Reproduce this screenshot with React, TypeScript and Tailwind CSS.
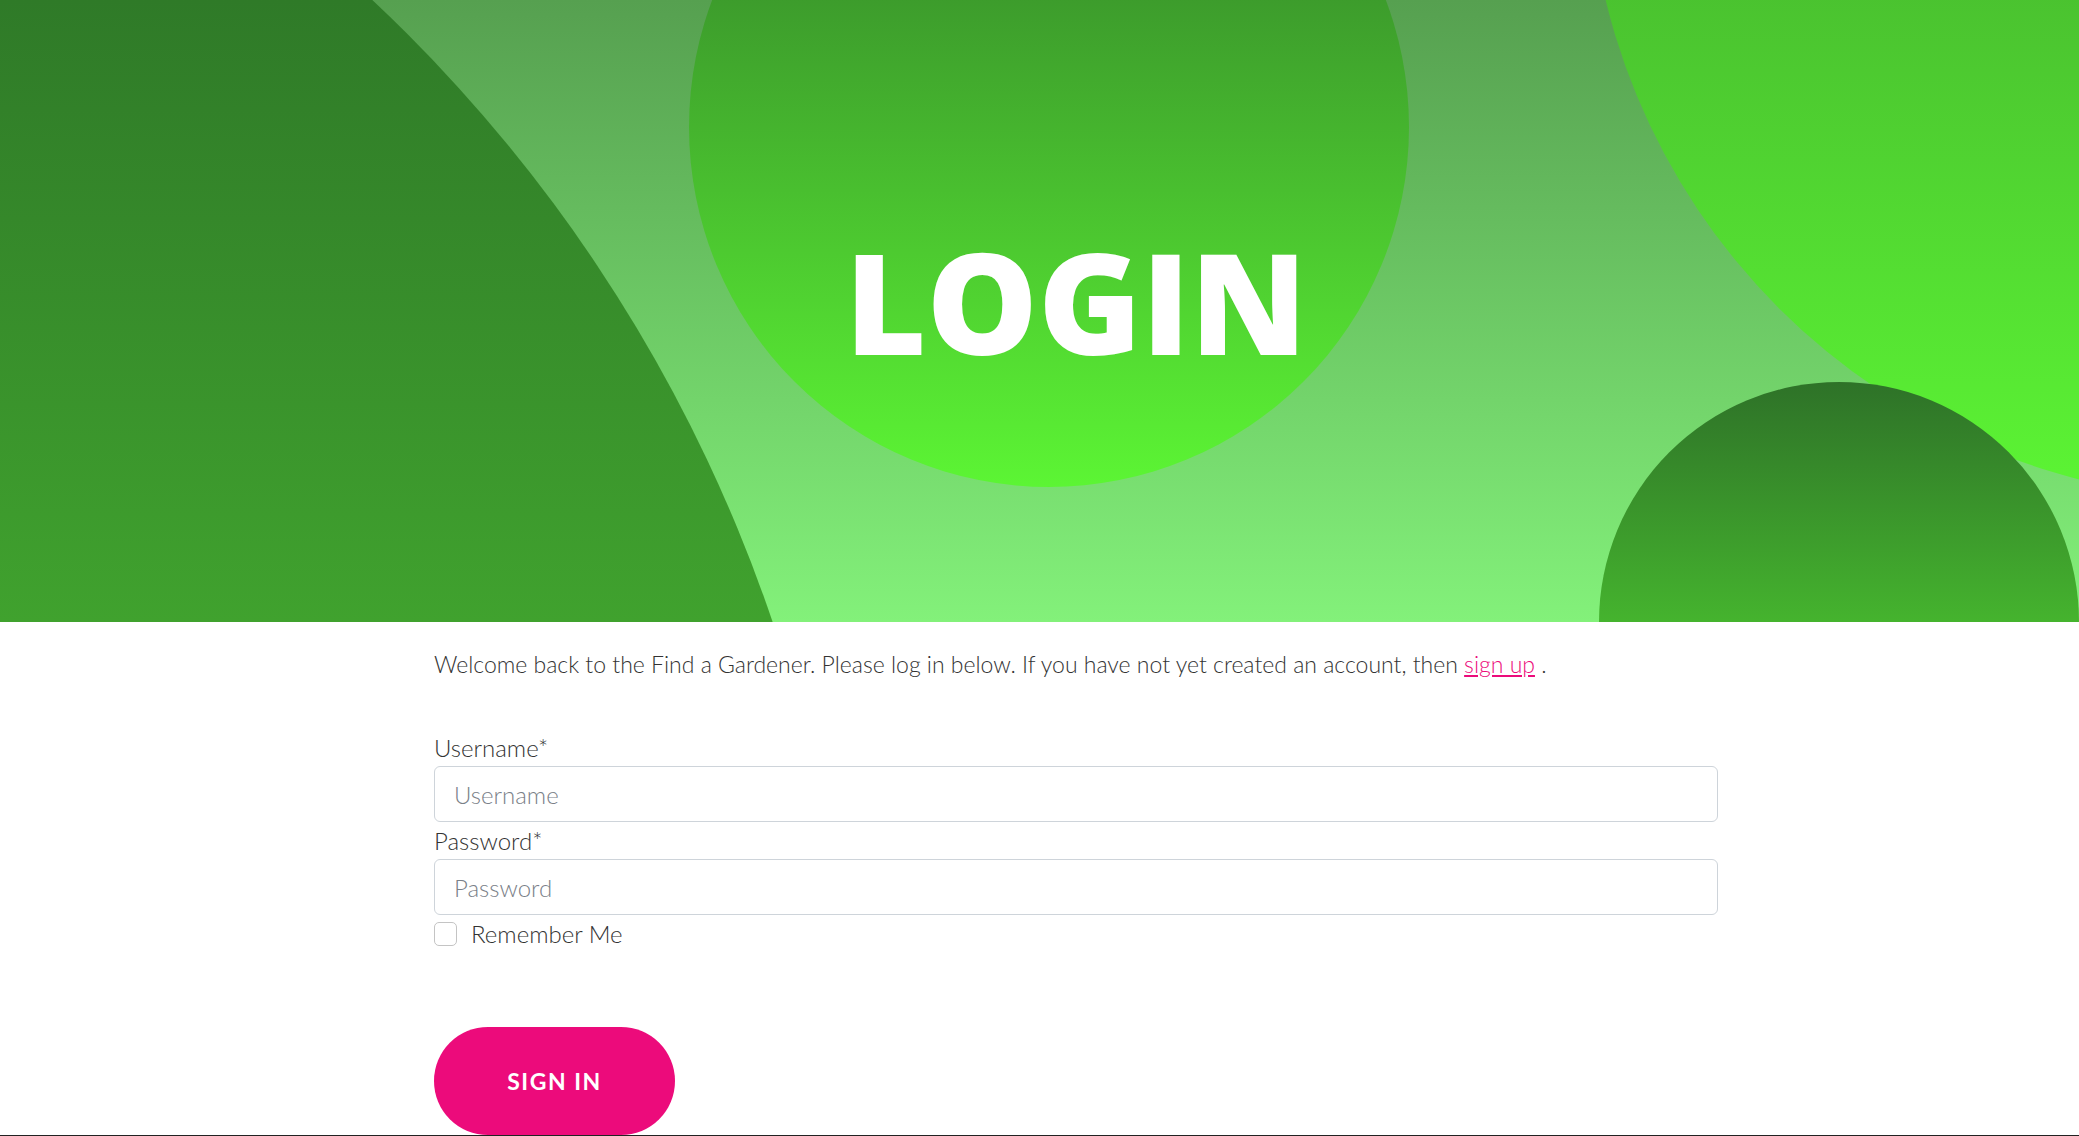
import { useState } from 'react';

const lato = { fontFamily: 'Lato, "Open Sans", sans-serif' };

function HeroArt() {
  return (
    <svg
      className="absolute inset-0 h-full w-full"
      viewBox="0 0 2079 622"
      preserveAspectRatio="none"
      aria-hidden="true"
    >
      <defs>
        <linearGradient id="bg" x1="0" y1="0" x2="0" y2="622" gradientUnits="userSpaceOnUse">
          <stop offset="0" stopColor="#56a050" />
          <stop offset="1" stopColor="#83f17a" />
        </linearGradient>
        <linearGradient id="blob" x1="0" y1="0" x2="0" y2="1">
          <stop offset="0" stopColor="#2e7228" />
          <stop offset="1" stopColor="#5cf534" />
        </linearGradient>
        <linearGradient id="bigLeft" x1="0" y1="0" x2="0" y2="622" gradientUnits="userSpaceOnUse">
          <stop offset="0" stopColor="#2f7a28" />
          <stop offset="1" stopColor="#40a22e" />
        </linearGradient>
      </defs>
      <rect x="0" y="0" width="2079" height="622" fill="url(#bg)" />
      <circle cx="-669" cy="1110" r="1522" fill="url(#bigLeft)" />
      <circle cx="1049" cy="127" r="360" fill="url(#blob)" />
      <circle cx="2242" cy="-155" r="655" fill="url(#blob)" />
      <circle cx="1839" cy="622" r="240" fill="url(#blob)" />
    </svg>
  );
}

export default function App() {
  const [username, setUsername] = useState('');
  const [password, setPassword] = useState('');
  const [remember, setRemember] = useState(false);

  return (
    <div className="min-h-screen bg-white" style={lato}>
      {/* Hero */}
      <div className="relative h-[622px] overflow-hidden">
        <HeroArt />
        <div className="relative ml-[434px] w-[1284px] pt-[231px] text-center">
          <h1
            className="text-[140px] font-extrabold leading-none text-white"
            style={{ fontFamily: '"Open Sans", sans-serif' }}
          >
            LOGIN
          </h1>
        </div>
      </div>

      {/* Form */}
      <div className="ml-[434px] w-[1284px] pt-[26px]">
        <p className="text-[23px] font-light leading-[33px] text-[#333]">
          Welcome back to the Find a Gardener. Please log in below. If you have not yet created an account, then{' '}
          <a href="#" className="text-[#ec0b7b] underline">sign up</a> .
        </p>

        <form className="mt-[48px]" onSubmit={(e) => e.preventDefault()}>
          <label className="block text-[24px] font-light leading-[37px] text-[#333]">Username*</label>
          <input
            type="text"
            value={username}
            onChange={(e) => setUsername(e.target.value)}
            placeholder="Username"
            className="block h-[56px] w-full rounded-[6px] border border-[#ced4da] px-[19px] text-[24px] font-light text-[#333] placeholder:text-[#7a8088] focus:outline-none"
          />
          <label className="block text-[24px] font-light leading-[37px] text-[#333]">Password*</label>
          <input
            type="password"
            value={password}
            onChange={(e) => setPassword(e.target.value)}
            placeholder="Password"
            className="block h-[56px] w-full rounded-[6px] border border-[#ced4da] px-[19px] text-[24px] font-light text-[#333] placeholder:text-[#7a8088] focus:outline-none"
          />
          <label className="flex h-[37px] items-center gap-[14px] text-[24px] font-light text-[#333]">
            <button
              type="button"
              onClick={() => setRemember(!remember)}
              className="h-[24px] w-[23px] rounded-[5px] border border-[#c4c4c4] bg-white"
            >
              {remember && <span className="block text-[16px] leading-none text-[#ec0b7b]">✓</span>}
            </button>
            Remember Me
          </label>

          <button
            type="submit"
            className="mt-[75px] flex h-[108px] w-[241px] items-center justify-center rounded-full bg-[#ec0b7b] text-[23px] font-bold tracking-[1.5px] text-white"
          >
            SIGN IN
          </button>
        </form>
      </div>
      <div className="h-[40px] bg-[#222]" />
    </div>
  );
}
